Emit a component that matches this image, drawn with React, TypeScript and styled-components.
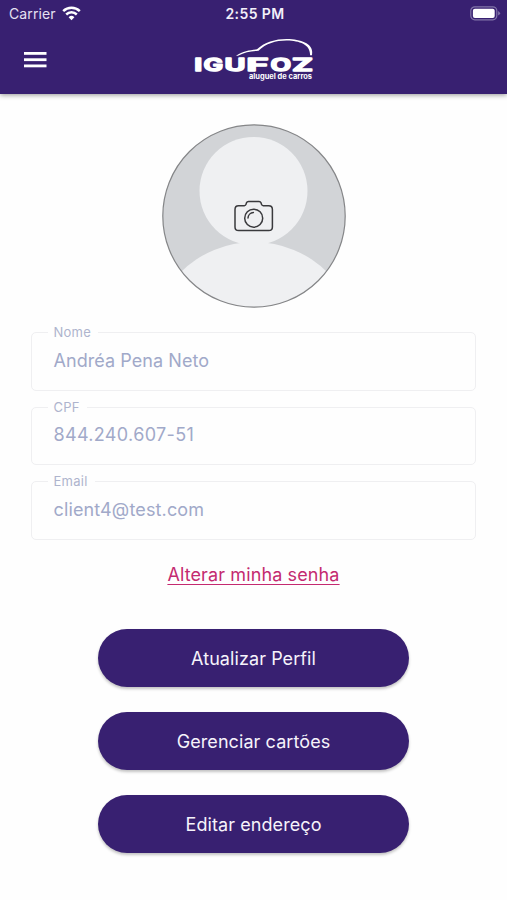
import React from "react";
import styled, { createGlobalStyle } from "styled-components";

const PURPLE = "#382071";

const GlobalStyle = createGlobalStyle`
  * { box-sizing: border-box; }
  body { margin: 0; background: #fefefe; font-family: Inter, "Liberation Sans", sans-serif; }
`;

const Screen = styled.div`
  width: 507px;
  height: 900px;
  overflow: hidden;
  background: #fefefe;
`;

const Header = styled.header`
  height: 94px;
  background: ${PURPLE};
  box-shadow: 0 1px 5px rgba(0, 0, 0, 0.42);
`;

const StatusBar = styled.div`
  height: 27px;
  display: grid;
  grid-template-columns: 1fr auto 1fr;
  align-items: center;
  padding: 0 6px 0 9px;
  color: #fff;
  line-height: 16px;
`;

const Carrier = styled.div`
  display: flex;
  align-items: center;
  gap: 6px;
  font-size: 14px;
  letter-spacing: 0.1px;
  color: #e6e0f2;
`;

const Clock = styled.div`
  font-size: 14px;
  font-weight: 600;
  letter-spacing: 0.4px;
  color: #f3effa;
`;

const BatterySlot = styled.div`
  display: flex;
  justify-content: flex-end;
`;

const NavBar = styled.div`
  height: 67px;
  display: grid;
  grid-template-columns: 1fr 120px 1fr;
  align-items: start;
  padding: 10px 24px 0;
`;

const MenuButton = styled.button`
  border: 0;
  padding: 15px 0 0;
  background: none;
  display: flex;
  svg { display: block; }
`;

const Content = styled.main`
  display: flex;
  flex-direction: column;
  align-items: center;
  padding-top: 30px;
`;

const Avatar = styled.svg`
  display: block;
`;

const Fields = styled.div`
  width: 445px;
  margin-top: 24px;
  display: flex;
  flex-direction: column;
  gap: 16px;
`;

const Field = styled.div`
  position: relative;
  height: 58.5px;
  border: 1.5px solid #efeff1;
  border-radius: 5px;
  padding: 15.5px 21.5px;
`;

const Label = styled.label`
  position: absolute;
  top: -9px;
  left: 16px;
  padding: 0 7px 0 5.5px;
  background: #fefefe;
  color: #aeb4cd;
  font-size: 13px;
  line-height: 16px;
  letter-spacing: 0.25px;
`;

const Value = styled.div<{ $spacing: number }>`
  color: #a1a9c9;
  font-size: 18px;
  line-height: 24px;
  letter-spacing: ${(p) => p.$spacing}px;
  white-space: nowrap;
`;

const PasswordLink = styled.a`
  margin-top: 23px;
  color: #c42a70;
  font-size: 18px;
  line-height: 24px;
  letter-spacing: 0.12px;
  text-decoration: underline;
  text-decoration-thickness: 1.3px;
  text-underline-offset: 3px;
  text-decoration-skip-ink: none;
`;

const Actions = styled.div`
  margin-top: 42px;
  display: flex;
  flex-direction: column;
  gap: 24.5px;
`;

const ActionButton = styled.button`
  width: 311px;
  height: 58.5px;
  border: 0;
  border-radius: 29.5px;
  padding: 1px 0 0;
  background: ${PURPLE};
  color: #f6f3fb;
  font-family: inherit;
  font-size: 18px;
  letter-spacing: 0.08px;
  box-shadow: 0 2px 3px rgba(0, 0, 0, 0.24);
`;

const WifiIcon = () => (
  <svg width="19" height="15" viewBox="0 0 19 15" fill="none" stroke="#fff" strokeWidth="2.5">
    <path d="M1.2 5.2 A12 12 0 0 1 17.8 5.2" />
    <path d="M4.2 8.5 A7.6 7.6 0 0 1 14.8 8.5" />
    <path d="M9.5 14.2 L6.6 11.2 A4.2 4.2 0 0 1 12.4 11.2 Z" fill="#fff" stroke="none" />
  </svg>
);

const BatteryIcon = () => (
  <svg width="31" height="15" viewBox="0 0 31 15">
    <rect x="0.8" y="0.8" width="26" height="13" rx="4" fill="none" stroke="#8275a9" strokeWidth="1.2" />
    <rect x="2.9" y="2.7" width="21.8" height="9.2" rx="2" fill="#fff" />
    <path d="M28.1 5 Q32 7.3 28.1 9.6 Z" fill="#8275a9" />
  </svg>
);

const MenuIcon = () => (
  <svg width="23" height="16" viewBox="0 0 23 16" fill="#fff">
    <rect y="0" width="22.5" height="2.8" />
    <rect y="6.3" width="22.5" height="2.8" />
    <rect y="12.5" width="22.5" height="2.8" />
  </svg>
);

const WordmarkLetter = styled.text`
  fill: #fff;
  stroke: #fff;
  stroke-width: 1.3px;
  stroke-linejoin: round;
  font-family: Inter, sans-serif;
  font-weight: 700;
  font-size: 17px;
`;

const wordmark = [
  { letter: "I", x: 194.2, width: 8 },
  { letter: "G", x: 203.4, width: 19.6 },
  { letter: "U", x: 224.5, width: 21 },
  { letter: "F", x: 246.6, width: 22 },
  { letter: "O", x: 270.6, width: 20.6 },
  { letter: "Z", x: 292, width: 21 },
];

const Logo = () => (
  <svg width="120" height="46" viewBox="194 37 120 46" role="img" aria-label="Igufoz aluguel de carros">
    <path
      d="M236 55.7 C243 51 250 50 257 49.3 C264 42 276 38.8 287 38.9 C301 39.2 312.2 43.5 312.2 52 L312 55.3 L310 55.3 C310.8 45 300 40.7 287 40.5 C276 40.4 266 43.5 258.5 50.7 C251 51.2 245 51.8 238 55.7 Z"
      fill="#fff"
    />
    {wordmark.map((w) => (
      <WordmarkLetter
        key={w.letter}
        x={w.x}
        y="70.5"
        textLength={w.width}
        lengthAdjust="spacingAndGlyphs"
      >
        {w.letter}
      </WordmarkLetter>
    ))}
    <text
      x="249"
      y="79"
      fill="#fff"
      fontFamily="Inter, sans-serif"
      fontWeight="700"
      fontSize="7.4"
      textLength="63"
      lengthAdjust="spacingAndGlyphs"
    >
      aluguel de carros
    </text>
  </svg>
);

const AvatarPicture = () => (
  <Avatar width="184" height="184" viewBox="162 124 184 184">
    <defs>
      <clipPath id="avatar-clip">
        <circle cx="254" cy="216" r="91.3" />
      </clipPath>
    </defs>
    <g clipPath="url(#avatar-clip)">
      <rect x="162" y="124" width="184" height="184" fill="#d2d4d7" />
      <circle cx="253.5" cy="191" r="54" fill="#eff0f2" />
      <circle cx="254" cy="346" r="104" fill="#eff0f2" />
    </g>
    <circle cx="254" cy="216" r="91.2" fill="none" stroke="#858688" strokeWidth="1.2" />
    <g fill="none" stroke="#3a3a3d" strokeWidth="1.5" strokeLinejoin="round" strokeLinecap="round">
      <path d="M238.5 205.7 H244.3 Q245.6 205.7 246 204.4 L246.5 202.8 Q247 201.4 248.5 201.4 H259 Q260.5 201.4 261 202.8 L261.5 204.4 Q261.9 205.7 263.2 205.7 H268.7 Q272.4 205.7 272.4 209.4 V227 Q272.4 230.6 268.7 230.6 H238.7 Q235 230.6 235 227 V209.4 Q235 205.7 238.5 205.7 Z" />
      <circle cx="253.7" cy="218.2" r="9" />
      <path d="M248 218 A5.7 5.7 0 0 1 253.4 212.6" />
    </g>
  </Avatar>
);

const fields = [
  { label: "Nome", value: "Andréa Pena Neto", spacing: 0.06 },
  { label: "CPF", value: "844.240.607-51", spacing: 0.34 },
  { label: "Email", value: "client4@test.com", spacing: 0.14 },
];

const actions = ["Atualizar Perfil", "Gerenciar cartões", "Editar endereço"];

export default function App() {
  return (
    <>
      <GlobalStyle />
      <Screen>
        <Header>
          <StatusBar>
            <Carrier>
              Carrier
              <WifiIcon />
            </Carrier>
            <Clock>2:55 PM</Clock>
            <BatterySlot>
              <BatteryIcon />
            </BatterySlot>
          </StatusBar>
          <NavBar>
            <MenuButton aria-label="Menu">
              <MenuIcon />
            </MenuButton>
            <Logo />
          </NavBar>
        </Header>
        <Content>
          <AvatarPicture />
          <Fields>
            {fields.map((f) => (
              <Field key={f.label}>
                <Label>{f.label}</Label>
                <Value $spacing={f.spacing}>{f.value}</Value>
              </Field>
            ))}
          </Fields>
          <PasswordLink>Alterar minha senha</PasswordLink>
          <Actions>
            {actions.map((text) => (
              <ActionButton key={text}>{text}</ActionButton>
            ))}
          </Actions>
        </Content>
      </Screen>
    </>
  );
}
